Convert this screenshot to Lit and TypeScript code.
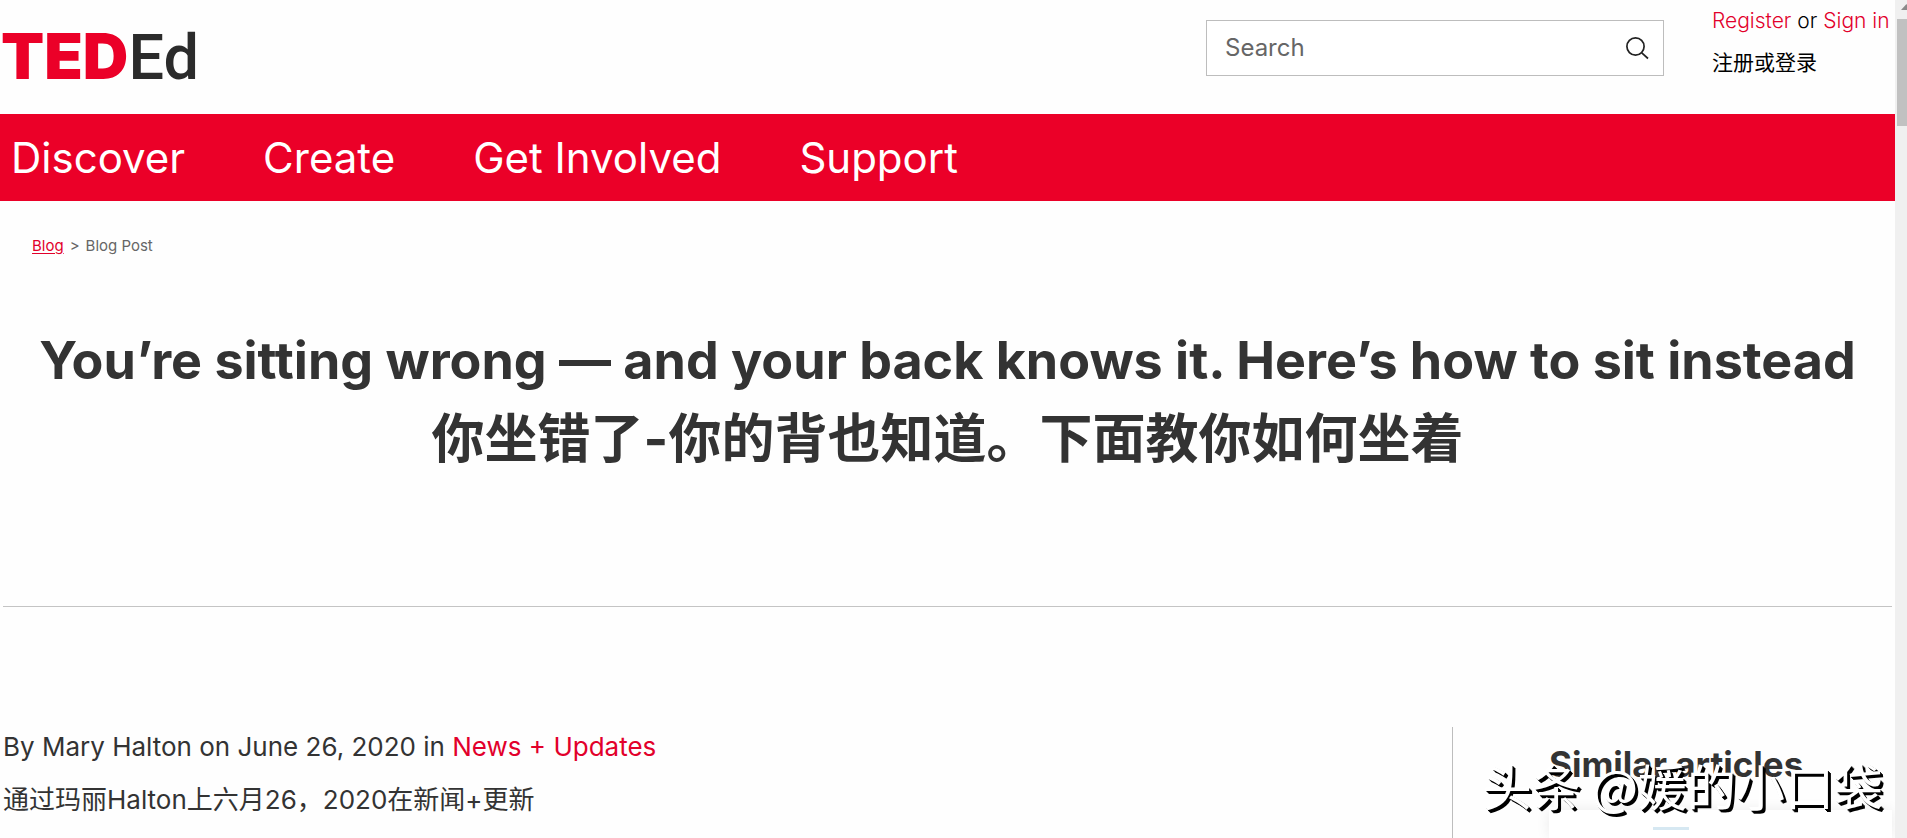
import { LitElement, html, css } from "lit";
import { customElement } from "lit/decorators.js";

const NAV = ["Discover", "Create", "Get Involved", "Support"];

@customElement("app-root")
class AppRoot extends LitElement {
  static styles = css`
    :host {
      display: block;
      font-family: Inter, "Noto Sans CJK SC", sans-serif;
      color: #333;
      background: #fefefe;
    }
    * { box-sizing: border-box; }
    a { color: #e2002b; text-decoration: none; }
    .window {
      position: relative;
      display: grid;
      grid-template-columns: minmax(0, 1fr) 12px;
      min-height: 100vh;
      overflow: hidden;
    }
    .page { display: flex; flex-direction: column; }
    .top {
      display: flex;
      justify-content: space-between;
      align-items: flex-start;
      height: 114px;
      padding-right: 3px;
    }
    .logo {
      display: flex;
      align-items: baseline;
      padding: 18px 0 0 1px;
      line-height: 76px;
      font-size: 63px;
      color: #2b2b2b;
    }
    .ted { font-weight: 900; color: #eb0028; }
    .ed { font-family: Roboto, "Liberation Sans", sans-serif; font-weight: 500; }
    .tools { display: flex; align-items: flex-start; gap: 48px; }
    .search {
      display: flex;
      align-items: center;
      width: 458px;
      height: 56px;
      margin-top: 20px;
      padding: 0 14px 0 18px;
      border: 1px solid #bdbdbd;
      background: #fff;
    }
    .search input {
      flex: 1;
      min-width: 0;
      padding: 0;
      border: 0;
      outline: 0;
      background: none;
      font: 400 24px/32px Inter, sans-serif;
    }
    .search input::placeholder { color: #666; opacity: 1; }
    .search button { display: flex; padding: 0; border: 0; background: none; }
    .account {
      font-size: 21px;
      font-weight: 300;
      line-height: 42px;
      color: #000;
      white-space: nowrap;
      width: 180px;
    }
    .account p { margin: 0; }
    .account .zh { font-weight: 400; }
    .nav {
      display: flex;
      align-items: center;
      gap: 78px;
      height: 87px;
      padding: 0 11px;
      background: #eb0028;
    }
    .nav a { color: #fff; font-size: 42px; line-height: 60px; }
    .crumbs {
      display: flex;
      gap: 6px;
      padding: 34px 32px 0;
      font-size: 15px;
      line-height: 22px;
      color: #666;
    }
    .crumbs a { text-decoration: underline; text-underline-offset: 2px; }
    h1 {
      margin: 0 3px;
      padding: 64px 0 127px;
      border-bottom: 1px solid #c4c4c4;
      text-align: center;
      font-size: 52px;
      line-height: 79px;
      font-weight: 700;
    }
    h1 span { display: block; font-size: 53px; }
    .body { flex: 1; display: flex; justify-content: space-between; padding-top: 120px; }
    .byline {
      padding-left: 3px;
      font-size: 26px;
      line-height: 53px;
      font-weight: 400;
      margin-top: -7px;
    }
    .byline p { margin: 0; }
    .side {
      width: 443px;
      padding: 12px 3px 0 96px;
      border-left: 1px solid #bdbdbd;
    }
    h2 { margin: 0; font-size: 35px; line-height: 50px; font-weight: 700; }
    .card {
      height: 28px;
      margin-top: 21px;
      padding-top: 17px;
      background: #fff;
      box-shadow: 0 0 14px rgba(0, 0, 0, 0.08);
    }
    .card i { display: block; width: 36px; height: 3px; margin-left: 104px; background: #d6e8f2; }
    .scroll { background: #f0f0f0; padding-left: 2px; overflow: hidden; }
    .scroll svg { display: block; }
    .thumb { height: 107px; background: #c1c1c1; }
    .mark {
      position: absolute;
      right: 24px;
      bottom: 18px;
      font-family: "Noto Sans CJK SC", sans-serif;
      font-size: 49px;
      line-height: 70px;
      color: #fff;
      text-shadow: 1px 1px 0 #000, 2px 2px 0 #000, 3px 3px 0 #000;
      white-space: nowrap;
    }
  `;

  render() {
    return html`
      <div class="window">
        <div class="page">
          <header class="top">
            <a class="logo" href="#" aria-label="TED Ed"><span class="ted">TED</span><span class="ed">Ed</span></a>
            <div class="tools">
              <form class="search" role="search">
                <input type="text" placeholder="Search" aria-label="Search" />
                <button type="button" aria-label="Submit search">
                  <svg width="24" height="24" viewBox="0 0 24 24" fill="none" stroke="#222" stroke-width="1.7">
                    <circle cx="10.5" cy="10.5" r="8.6" />
                    <path d="M16.8 16.8L23 22.5" />
                  </svg>
                </button>
              </form>
              <div class="account">
                <p><a href="#">Register</a> or <a href="#">Sign in</a></p>
                <p class="zh" lang="zh-CN">注册或登录</p>
              </div>
            </div>
          </header>
          <nav class="nav">${NAV.map((n) => html`<a href="#">${n}</a>`)}</nav>
          <div class="crumbs"><a href="#">Blog</a><span>&gt;</span><span>Blog Post</span></div>
          <h1>
            You’re sitting wrong — and your back knows it. Here’s how to sit instead
            <span lang="zh-CN">你坐错了-你的背也知道。下面教你如何坐着</span>
          </h1>
          <main class="body">
            <div class="byline">
              <p>By Mary Halton on June 26, 2020 in <a href="#">News + Updates</a></p>
              <p lang="zh-CN">通过玛丽Halton上六月26，2020在新闻+更新</p>
            </div>
            <aside class="side">
              <h2>Similar articles</h2>
              <div class="card"><i></i></div>
            </aside>
          </main>
        </div>
        <div class="scroll">
          <svg width="16" height="19" viewBox="0 0 16 19"><path d="M4 10L9.500 4L15 10z" fill="#8a8a8a" /></svg>
          <div class="thumb"></div>
        </div>
        <div class="mark" lang="zh-CN">头条 @媛的小口袋</div>
      </div>
    `;
  }
}
